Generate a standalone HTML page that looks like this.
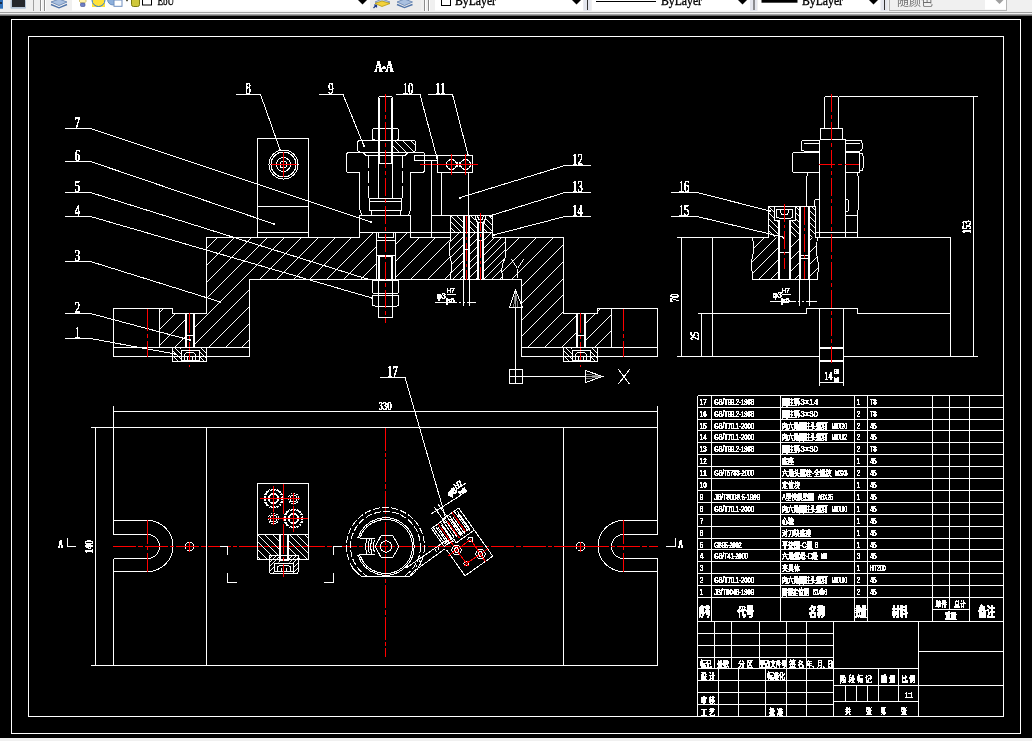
<!DOCTYPE html>
<html lang="zh-CN"><head><meta charset="utf-8"><title>夹具装配图</title>
<style>
html,body{margin:0;padding:0;background:#000;overflow:hidden}
body{width:1032px;height:741px;position:relative}
svg{position:absolute;left:0;top:0;display:block;will-change:transform}
#cad{shape-rendering:crispEdges;fill:none;stroke:#fff;stroke-width:1}
#cad text{stroke:none}
#cad g.dw text{fill:#fff;filter:url(#bin)}
#cad g.dw text.l{stroke:#fff;stroke-width:.25px}
#cad g.dw text.m{stroke:#fff;stroke-width:.4px}
#cad g.dw text.b{stroke:#fff;stroke-width:.3px;font-weight:normal}
#cad g.dw text.bb{font-weight:bold}
.ts{font-family:"Liberation Serif",serif}
.tn{font-family:"Liberation Sans","Noto Sans CJK SC",sans-serif}
.tc{font-family:"Liberation Sans","Noto Sans CJK SC",sans-serif}
#tb text.k{font-family:"Liberation Serif","Noto Serif CJK SC",serif;fill:#000;stroke:#000;stroke-width:.35px}
#tb text.g{font-family:"Liberation Sans","Noto Sans CJK SC",sans-serif;fill:#6d6d6d}
</style></head><body>
<svg id="cad" width="1032" height="741" viewBox="0 0 1032 741">
<defs><filter id="bin" x="-5%" y="-20%" width="110%" height="140%" color-interpolation-filters="sRGB"><feComponentTransfer><feFuncA type="discrete" tableValues="0 0 1 1 1 1"/></feComponentTransfer></filter></defs>
<rect x="0" y="0" width="1032" height="741" fill="#000" stroke="none"/>
<g class="dw" id="s1_frame">
<!-- drawing sheet frame -->
<rect x="11.5" y="19.5" width="1009" height="714"/>
<rect x="28.5" y="36.5" width="975" height="680"/>
<!-- balloon leaders -->
<line x1="65" y1="338.5" x2="90.5" y2="338.5"/>
<line x1="90.5" y1="338.5" x2="175" y2="354"/>
<rect x="174" y="353" width="2" height="2" fill="#fff" stroke="none"/>
<text font-size="17.3" text-anchor="middle" transform="translate(77.5 337.5) scale(0.62 1)" class="ts l">1</text>
<line x1="65" y1="313.5" x2="90.5" y2="313.5"/>
<line x1="90.5" y1="313.5" x2="190" y2="340"/>
<rect x="189" y="339" width="2" height="2" fill="#fff" stroke="none"/>
<text font-size="17.3" text-anchor="middle" transform="translate(77.5 312.5) scale(0.62 1)" class="ts l">2</text>
<line x1="65" y1="261.5" x2="90.5" y2="261.5"/>
<line x1="90.5" y1="261.5" x2="220.5" y2="302"/>
<rect x="219" y="301" width="2" height="2" fill="#fff" stroke="none"/>
<text font-size="17.3" text-anchor="middle" transform="translate(77.5 260.5) scale(0.62 1)" class="ts l">3</text>
<line x1="65" y1="216.5" x2="90.5" y2="216.5"/>
<line x1="90.5" y1="216.5" x2="372" y2="298"/>
<rect x="371" y="297" width="2" height="2" fill="#fff" stroke="none"/>
<text font-size="17.3" text-anchor="middle" transform="translate(77.5 215.5) scale(0.62 1)" class="ts l">4</text>
<line x1="65" y1="192.5" x2="90.5" y2="192.5"/>
<line x1="90.5" y1="192.5" x2="367" y2="279"/>
<rect x="366" y="278" width="2" height="2" fill="#fff" stroke="none"/>
<text font-size="17.3" text-anchor="middle" transform="translate(77.5 191.5) scale(0.62 1)" class="ts l">5</text>
<line x1="65" y1="161.5" x2="90.5" y2="161.5"/>
<line x1="90.5" y1="161.5" x2="274" y2="224"/>
<rect x="273" y="223" width="2" height="2" fill="#fff" stroke="none"/>
<text font-size="17.3" text-anchor="middle" transform="translate(77.5 160.5) scale(0.62 1)" class="ts l">6</text>
<line x1="65" y1="128.5" x2="90.5" y2="128.5"/>
<line x1="90.5" y1="128.5" x2="371" y2="222"/>
<rect x="370" y="221" width="2" height="2" fill="#fff" stroke="none"/>
<text font-size="17.3" text-anchor="middle" transform="translate(77.5 127.5) scale(0.62 1)" class="ts l">7</text>
<line x1="236" y1="94.5" x2="260.5" y2="94.5"/>
<line x1="260.5" y1="94.5" x2="280" y2="149.5"/>
<rect x="279" y="149" width="2" height="2" fill="#fff" stroke="none"/>
<text font-size="17.3" text-anchor="middle" transform="translate(248.25 93.5) scale(0.62 1)" class="ts l">8</text>
<line x1="319" y1="94.5" x2="343" y2="94.5"/>
<line x1="343" y1="94.5" x2="364" y2="146"/>
<rect x="363" y="145" width="2" height="2" fill="#fff" stroke="none"/>
<text font-size="17.3" text-anchor="middle" transform="translate(331 93.5) scale(0.62 1)" class="ts l">9</text>
<line x1="396" y1="94.5" x2="420" y2="94.5"/>
<line x1="420" y1="94.5" x2="437" y2="158"/>
<rect x="436" y="157" width="2" height="2" fill="#fff" stroke="none"/>
<text font-size="17.3" text-anchor="middle" transform="translate(408 93.5) scale(0.62 1)" class="ts l">10</text>
<line x1="428" y1="94.5" x2="452.5" y2="94.5"/>
<line x1="452.5" y1="94.5" x2="468" y2="155"/>
<rect x="467" y="154" width="2" height="2" fill="#fff" stroke="none"/>
<text font-size="17.3" text-anchor="middle" transform="translate(440.25 93.5) scale(0.62 1)" class="ts l">11</text>
<line x1="565" y1="165.5" x2="590.5" y2="165.5"/>
<line x1="565" y1="165.5" x2="460.5" y2="197.5"/>
<rect x="459" y="197" width="2" height="2" fill="#fff" stroke="none"/>
<text font-size="17.3" text-anchor="middle" transform="translate(577.5 164.5) scale(0.62 1)" class="ts l">12</text>
<line x1="565" y1="192.5" x2="590.5" y2="192.5"/>
<line x1="565" y1="192.5" x2="491" y2="215.5"/>
<rect x="490" y="215" width="2" height="2" fill="#fff" stroke="none"/>
<text font-size="17.3" text-anchor="middle" transform="translate(577.5 191.5) scale(0.62 1)" class="ts l">13</text>
<line x1="565" y1="216.5" x2="590.5" y2="216.5"/>
<line x1="565" y1="216.5" x2="493.5" y2="235"/>
<rect x="493" y="234" width="2" height="2" fill="#fff" stroke="none"/>
<text font-size="17.3" text-anchor="middle" transform="translate(577.5 215.5) scale(0.62 1)" class="ts l">14</text>
<line x1="671" y1="192.5" x2="697" y2="192.5"/>
<line x1="697" y1="192.5" x2="770" y2="211"/>
<rect x="769" y="210" width="2" height="2" fill="#fff" stroke="none"/>
<text font-size="17.3" text-anchor="middle" transform="translate(684 191.5) scale(0.62 1)" class="ts l">16</text>
<line x1="671" y1="216.5" x2="697" y2="216.5"/>
<line x1="697" y1="216.5" x2="784.5" y2="237.5"/>
<rect x="783" y="237" width="2" height="2" fill="#fff" stroke="none"/>
<text font-size="17.3" text-anchor="middle" transform="translate(684 215.5) scale(0.62 1)" class="ts l">15</text>
<line x1="380" y1="377.5" x2="405" y2="377.5"/>
<line x1="405" y1="377.5" x2="446" y2="519"/>
<text font-size="17.3" text-anchor="middle" transform="translate(392.5 376.5) scale(0.62 1)" class="ts l">17</text>
<text font-size="17" text-anchor="middle" transform="translate(384 71.5) scale(0.62 1)" class="ts b bb">A-A</text>
</g>
<g class="dw" id="s2_front">
<!-- front section view A-A -->
<polyline points="249.5,356.5 113.5,356.5 113.5,308.5 172.5,308.5 172.5,313.5 206.5,313.5 206.5,237.5 359.5,237.5"/>
<line x1="410.5" y1="237.5" x2="450.5" y2="237.5"/>
<polyline points="492.5,237.5 563.5,237.5 563.5,313.5 597.5,313.5 597.5,308.5 657.5,308.5 657.5,356.5 521.5,356.5 521.5,279.5 249.5,279.5 249.5,356.5"/>
<line x1="113.5" y1="347.5" x2="249.5" y2="347.5"/>
<line x1="521.5" y1="347.5" x2="657.5" y2="347.5"/>
<line x1="159.5" y1="308.5" x2="159.5" y2="347.5"/>
<line x1="611.5" y1="308.5" x2="611.5" y2="347.5"/>
<clipPath id="h1"><path d="M206.5 237.5 L359.5 237.5 L359.5 232.5 L410.5 232.5 L410.5 237.5 L563.5 237.5 L563.5 313.5 L597.5 313.5 L597.5 308.5 L611.5 308.5 L611.5 347.5 L521.5 347.5 L521.5 279.5 L249.5 279.5 L249.5 347.5 L159.5 347.5 L159.5 308.5 L172.5 308.5 L172.5 313.5 L206.5 313.5Z M185.5 313.5 L194.5 313.5 L194.5 347.5 L185.5 347.5Z M576.5 313.5 L585.5 313.5 L585.5 347.5 L576.5 347.5Z M376 232.5 L395.5 232.5 L395.5 279.5 L376 279.5Z M450 237.5 L505.5 237.5 L505.5 257 L503 263 L501.5 270 L503 279.5 L450 279.5 L452 265 L449 252Z" clip-rule="evenodd"/></clipPath>
<path clip-path="url(#h1)" d="M56.5 347.5L171.5 232.5M73.5 347.5L188.5 232.5M90.5 347.5L205.5 232.5M107.5 347.5L222.5 232.5M124.5 347.5L239.5 232.5M141.5 347.5L256.5 232.5M157.5 347.5L272.5 232.5M174.5 347.5L289.5 232.5M191.5 347.5L306.5 232.5M208.5 347.5L323.5 232.5M225.5 347.5L340.5 232.5M241.5 347.5L356.5 232.5M258.5 347.5L373.5 232.5M275.5 347.5L390.5 232.5M292.5 347.5L407.5 232.5M309.5 347.5L424.5 232.5M325.5 347.5L440.5 232.5M342.5 347.5L457.5 232.5M359.5 347.5L474.5 232.5M376.5 347.5L491.5 232.5M393.5 347.5L508.5 232.5M409.5 347.5L524.5 232.5M426.5 347.5L541.5 232.5M443.5 347.5L558.5 232.5M460.5 347.5L575.5 232.5M477.5 347.5L592.5 232.5M494.5 347.5L609.5 232.5M510.5 347.5L625.5 232.5M527.5 347.5L642.5 232.5M544.5 347.5L659.5 232.5M561.5 347.5L676.5 232.5M578.5 347.5L693.5 232.5M594.5 347.5L709.5 232.5"/>
<line x1="185.5" y1="313.5" x2="185.5" y2="347.5"/>
<line x1="186.5" y1="313.5" x2="186.5" y2="347.5"/>
<line x1="194" y1="313.5" x2="194" y2="347.5"/>
<line x1="193" y1="313.5" x2="193" y2="347.5"/>
<line x1="185.5" y1="335.5" x2="194" y2="335.5"/>
<line x1="189.5" y1="313" x2="189.5" y2="367" stroke="#f00" stroke-dasharray="20 3 3 3"/>
<rect x="172.5" y="347.5" width="34" height="14"/>
<rect x="181" y="350.5" width="18" height="10"/>
<clipPath id="h2"><path d="M172.5 347.5 L181 347.5 L181 361.5 L172.5 361.5Z" clip-rule="evenodd"/></clipPath>
<path clip-path="url(#h2)" d="M159.5 347.5L173.5 361.5M164.5 347.5L178.5 361.5M169.5 347.5L183.5 361.5M174.5 347.5L188.5 361.5M179.5 347.5L193.5 361.5"/>
<clipPath id="h3"><path d="M199 347.5 L206.5 347.5 L206.5 361.5 L199 361.5Z" clip-rule="evenodd"/></clipPath>
<path clip-path="url(#h3)" d="M185.5 347.5L199.5 361.5M190.5 347.5L204.5 361.5M195.5 347.5L209.5 361.5M200.5 347.5L214.5 361.5M205.5 347.5L219.5 361.5"/>
<polyline points="184.5,360.5 184.5,354.5 186.5,352.5 193.5,352.5 195.5,354.5 195.5,360.5"/>
<line x1="187.5" y1="355.5" x2="187.5" y2="360.5"/>
<line x1="192.5" y1="355.5" x2="192.5" y2="360.5"/>
<line x1="576.5" y1="313.5" x2="576.5" y2="347.5"/>
<line x1="577.5" y1="313.5" x2="577.5" y2="347.5"/>
<line x1="585" y1="313.5" x2="585" y2="347.5"/>
<line x1="584" y1="313.5" x2="584" y2="347.5"/>
<line x1="576.5" y1="335.5" x2="585" y2="335.5"/>
<line x1="580.5" y1="313" x2="580.5" y2="367" stroke="#f00" stroke-dasharray="20 3 3 3"/>
<rect x="563.5" y="347.5" width="34" height="14"/>
<rect x="572" y="350.5" width="18" height="10"/>
<clipPath id="h4"><path d="M563.5 347.5 L572 347.5 L572 361.5 L563.5 361.5Z" clip-rule="evenodd"/></clipPath>
<path clip-path="url(#h4)" d="M550.5 347.5L564.5 361.5M555.5 347.5L569.5 361.5M560.5 347.5L574.5 361.5M565.5 347.5L579.5 361.5M570.5 347.5L584.5 361.5"/>
<clipPath id="h5"><path d="M590 347.5 L597.5 347.5 L597.5 361.5 L590 361.5Z" clip-rule="evenodd"/></clipPath>
<path clip-path="url(#h5)" d="M576.5 347.5L590.5 361.5M581.5 347.5L595.5 361.5M586.5 347.5L600.5 361.5M591.5 347.5L605.5 361.5M596.5 347.5L610.5 361.5"/>
<polyline points="575.5,360.5 575.5,354.5 577.5,352.5 584.5,352.5 586.5,354.5 586.5,360.5"/>
<line x1="578.5" y1="355.5" x2="578.5" y2="360.5"/>
<line x1="583.5" y1="355.5" x2="583.5" y2="360.5"/>
<line x1="147.5" y1="308.5" x2="147.5" y2="356.5" stroke="#f00" stroke-dasharray="22 3 4 3"/>
<line x1="623.5" y1="308.5" x2="623.5" y2="356.5" stroke="#f00" stroke-dasharray="22 3 4 3"/>
<rect x="257.5" y="138.5" width="51" height="99"/>
<line x1="257.5" y1="206.5" x2="308.5" y2="206.5"/>
<line x1="257.5" y1="232.5" x2="308.5" y2="232.5"/>
<circle cx="283.5" cy="164.5" r="14.5"/>
<circle cx="283.5" cy="164.5" r="12.5"/>
<circle cx="283.5" cy="164.5" r="7"/>
<circle cx="283.5" cy="164.5" r="3.5"/>
<line x1="271" y1="164.5" x2="296.5" y2="164.5" stroke="#f00"/>
<line x1="283.5" y1="151.5" x2="283.5" y2="177" stroke="#f00"/>
<path d="M378.5 163.5V98.5Q378.5 96.5 380.5 96.5H390.5Q392.5 96.5 392.5 98.5V163.5Z"/>
<line x1="379.5" y1="97.5" x2="379.5" y2="163.5"/>
<line x1="391.5" y1="97.5" x2="391.5" y2="163.5"/>
<path d="M372.5 130.5Q372.5 128.5 374.5 128.5H396.5Q398.5 128.5 398.5 130.5V138Q398.5 140 396.5 140H374.5Q372.5 140 372.5 138Z"/>
<path d="M357.5 143Q357.5 140.5 360 140.5H413Q415.5 140.5 415.5 143V149Q415.5 152 413 152H360Q357.5 152 357.5 149Z"/>
<clipPath id="h6"><path d="M393 140.5 L415.5 140.5 L415.5 152 L393 152Z" clip-rule="evenodd"/></clipPath>
<path clip-path="url(#h6)" d="M387.5 140.5L399 152M394.5 140.5L406 152M402.5 140.5L414 152M410.5 140.5L422 152"/>
<path d="M362 215.5L359.500 209V172.500H349Q346.5 172.5 346.5 170V155Q346.5 152.5 349 152.5H422Q424.5 152.5 424.5 155V170Q424.5 172.5 422 172.5H410.500V209L408.500 215.500"/>
<line x1="363" y1="152.5" x2="366" y2="155.5"/>
<line x1="366" y1="155.5" x2="405" y2="155.5"/>
<line x1="405" y1="155.5" x2="408" y2="152.5"/>
<line x1="368.5" y1="155.5" x2="368.5" y2="198.5" stroke-dasharray="12 3"/>
<line x1="402.5" y1="155.5" x2="402.5" y2="198.5" stroke-dasharray="12 3"/>
<line x1="378.5" y1="163.5" x2="378.5" y2="198.5"/>
<line x1="392.5" y1="163.5" x2="392.5" y2="198.5"/>
<rect x="369.5" y="198.5" width="32" height="12"/>
<line x1="369.5" y1="201.5" x2="401.5" y2="201.5"/>
<rect x="371.5" y="210.5" width="28.5" height="5"/>
<polyline points="359.5,237.5 359.5,215.5 410.5,215.5 410.5,237.5"/>
<line x1="359.5" y1="232.5" x2="410.5" y2="232.5"/>
<polyline points="378.5,232.5 378.5,237.5 393.5,237.5 393.5,232.5"/>
<line x1="376" y1="232.5" x2="376" y2="279.5"/>
<line x1="395.5" y1="232.5" x2="395.5" y2="279.5"/>
<line x1="376" y1="240.5" x2="395.5" y2="240.5"/>
<line x1="376" y1="255.5" x2="395.5" y2="255.5"/>
<line x1="378.5" y1="255.5" x2="378.5" y2="317.5"/>
<line x1="392.5" y1="255.5" x2="392.5" y2="317.5"/>
<line x1="379.5" y1="256.5" x2="379.5" y2="279.5"/>
<line x1="391.5" y1="256.5" x2="391.5" y2="279.5"/>
<line x1="378.5" y1="256.5" x2="392.5" y2="256.5"/>
<line x1="378.5" y1="317.5" x2="392.5" y2="317.5"/>
<path d="M372.5 282Q372.5 280 374.5 280H396.5Q398.5 280 398.5 282V291.5Q398.5 293.5 396.5 293.5H374.5Q372.5 293.5 372.5 291.5Z"/>
<path d="M372.5 297Q372.5 295 374.5 295H396.5Q398.5 295 398.5 297V304Q398.5 306 396.5 306H374.5Q372.5 306 372.5 304Z"/>
<line x1="378.5" y1="280" x2="378.5" y2="306.5"/>
<line x1="392.5" y1="280" x2="392.5" y2="306.5"/>
<line x1="385.5" y1="94" x2="385.5" y2="323" stroke="#f00" stroke-dasharray="18 3 4 3"/>
<rect x="414.5" y="155.5" width="23" height="5"/>
<rect x="437.5" y="155.5" width="35" height="17"/>
<circle cx="451.5" cy="164.5" r="5"/>
<circle cx="465.5" cy="164.5" r="5"/>
<line x1="457" y1="162.5" x2="460" y2="166.5"/>
<line x1="457" y1="166.5" x2="460" y2="162.5"/>
<line x1="420" y1="164.5" x2="477.5" y2="164.5" stroke="#f00"/>
<line x1="451.5" y1="154" x2="451.5" y2="175" stroke="#f00"/>
<line x1="465.5" y1="154" x2="465.5" y2="175" stroke="#f00"/>
<line x1="441.5" y1="172.5" x2="441.5" y2="215.5"/>
<line x1="468.5" y1="172.5" x2="468.5" y2="237.5"/>
<line x1="431.5" y1="160.5" x2="431.5" y2="237.5"/>
<line x1="410.5" y1="232.5" x2="431.5" y2="232.5"/>
<line x1="431.5" y1="232.5" x2="450.5" y2="232.5"/>
<polyline points="450.5,237.5 431.5,237.5 431.5,215.5 492.5,215.5 492.5,237.5"/>
<line x1="450.5" y1="215.5" x2="450.5" y2="237.5"/>
<line x1="450.5" y1="232.5" x2="492.5" y2="232.5"/>
<clipPath id="h7"><path d="M450.5 215.5 L463.5 215.5 L463.5 232.5 L450.5 232.5Z" clip-rule="evenodd"/></clipPath>
<path clip-path="url(#h7)" d="M438.5 215.5L455.5 232.5M444.5 215.5L461.5 232.5M450.5 215.5L467.5 232.5M456.5 215.5L473.5 232.5M462.5 215.5L479.5 232.5"/>
<clipPath id="h8"><path d="M469.5 215.5 L475 215.5 L475 222 L477.5 222 L477.5 232.5 L469.5 232.5Z" clip-rule="evenodd"/></clipPath>
<path clip-path="url(#h8)" d="M452.5 215.5L469.5 232.5M458.5 215.5L475.5 232.5M464.5 215.5L481.5 232.5M470.5 215.5L487.5 232.5M476.5 215.5L493.5 232.5"/>
<clipPath id="h9"><path d="M486 215.5 L492.5 215.5 L492.5 232.5 L483.5 232.5 L483.5 222 L486 222Z" clip-rule="evenodd"/></clipPath>
<path clip-path="url(#h9)" d="M470.5 215.5L487.5 232.5M476.5 215.5L493.5 232.5M482.5 215.5L499.5 232.5M488.5 215.5L505.5 232.5"/>
<line x1="463.5" y1="215.5" x2="463.5" y2="306"/>
<line x1="469.5" y1="215.5" x2="469.5" y2="306"/>
<line x1="464.5" y1="215.5" x2="464.5" y2="279.5"/>
<line x1="468.5" y1="215.5" x2="468.5" y2="279.5"/>
<line x1="466.5" y1="216" x2="466.5" y2="279.5" stroke="#f00" stroke-dasharray="18 3 3 3"/>
<line x1="463.5" y1="249.5" x2="469.5" y2="249.5"/>
<polyline points="475.5,215.5 475.5,218.5 477.5,222.5 477.5,279.5"/>
<polyline points="485.5,215.5 485.5,218.5 483.5,222.5 483.5,279.5"/>
<line x1="478.5" y1="222.5" x2="478.5" y2="279.5"/>
<line x1="482.5" y1="222.5" x2="482.5" y2="279.5"/>
<polyline points="477.5,215.5 478.5,219.5 482.5,219.5 483.5,215.5"/>
<line x1="476.5" y1="222.5" x2="484.5" y2="222.5"/>
<line x1="477.5" y1="240.5" x2="483.5" y2="240.5"/>
<line x1="480.5" y1="212.5" x2="480.5" y2="279.5" stroke="#f00" stroke-dasharray="18 3 3 3"/>
<polyline points="505.5,237.5 505.5,257 503,263 501.5,270 503,279.5"/>
<polyline points="450.5,237.5 449,252 452,265 450,279.5"/>
<clipPath id="h10"><path d="M450.5 232.5 L492.5 232.5 L492.5 237.5 L505.5 237.5 L505.5 257 L503 263 L501.5 270 L503 279.5 L450 279.5 L452 265 L449 252 L450.5 240Z M463.5 232.5 L469.5 232.5 L469.5 279.5 L463.5 279.5Z M477.5 232.5 L483.5 232.5 L483.5 279.5 L477.5 279.5Z" clip-rule="evenodd"/></clipPath>
<path clip-path="url(#h10)" d="M404.5 279.5L451.5 232.5M412.5 279.5L459.5 232.5M420.5 279.5L467.5 232.5M428.5 279.5L475.5 232.5M436.5 279.5L483.5 232.5M444.5 279.5L491.5 232.5M452.5 279.5L499.5 232.5M459.5 279.5L506.5 232.5M467.5 279.5L514.5 232.5M475.5 279.5L522.5 232.5M483.5 279.5L530.5 232.5M491.5 279.5L538.5 232.5M499.5 279.5L546.5 232.5"/>
<line x1="435" y1="302.5" x2="475.5" y2="302.5" stroke-dasharray="22 2 2 2 2 2"/>
<text x="436.7" y="298.5" font-size="9" textLength="9" lengthAdjust="spacingAndGlyphs" class="tn b">φ3</text>
<line x1="446.5" y1="294.5" x2="455.5" y2="294.5"/>
<text x="447" y="293.3" font-size="6.5" textLength="7.5" lengthAdjust="spacingAndGlyphs" class="tn b">H7</text>
<text x="446.5" y="302.5" font-size="6.5" textLength="8" lengthAdjust="spacingAndGlyphs" class="tn b">js6</text>
<rect x="509.5" y="369.5" width="13" height="14"/>
<line x1="515.5" y1="369.5" x2="515.5" y2="383.5"/>
<line x1="509.5" y1="376.5" x2="522.5" y2="376.5"/>
<line x1="515.5" y1="307.5" x2="515.5" y2="369.5"/>
<line x1="515.5" y1="292" x2="513.5" y2="307.5" stroke="#777"/>
<line x1="515.5" y1="292" x2="518" y2="307.5" stroke="#777"/>
<line x1="515.5" y1="292" x2="515.5" y2="307.5" stroke="#aaa"/>
<polygon points="515.5,290 509.5,307.5 522.5,307.5"/>
<line x1="522.5" y1="376.5" x2="585.5" y2="376.5"/>
<line x1="601" y1="376.5" x2="585.5" y2="374" stroke="#777"/>
<line x1="601" y1="376.5" x2="585.5" y2="379" stroke="#777"/>
<line x1="601" y1="376.5" x2="585.5" y2="376.5" stroke="#aaa"/>
<polygon points="602.5,376.5 585.5,370.5 585.5,382.5"/>
<line x1="618.5" y1="369.5" x2="629.5" y2="384"/>
<line x1="629.5" y1="369.5" x2="618.5" y2="384"/>
<line x1="511.5" y1="259.5" x2="517.5" y2="268.5"/>
<line x1="523.5" y1="259.5" x2="517.5" y2="268.5"/>
<line x1="517.5" y1="268.5" x2="517.5" y2="277.5"/>
</g>
<g class="dw" id="s3_side">
<!-- right side view -->
<line x1="677" y1="237.5" x2="768.5" y2="237.5"/>
<line x1="815" y1="237.5" x2="950.5" y2="237.5"/>
<line x1="712.5" y1="237.5" x2="712.5" y2="356.5"/>
<line x1="950.5" y1="237.5" x2="950.5" y2="356.5"/>
<line x1="677" y1="356.5" x2="819.5" y2="356.5"/>
<line x1="843.5" y1="356.5" x2="978" y2="356.5"/>
<polyline points="697.5,313.5 806.5,313.5 806.5,308.5 857.5,308.5 857.5,313.5 950.5,313.5"/>
<line x1="819.5" y1="308.5" x2="819.5" y2="386"/>
<line x1="843.5" y1="308.5" x2="843.5" y2="386"/>
<line x1="819.5" y1="347.5" x2="843.5" y2="347.5"/>
<line x1="819.5" y1="348.5" x2="843.5" y2="348.5"/>
<line x1="819.5" y1="361.5" x2="843.5" y2="361.5"/>
<line x1="819.5" y1="360.5" x2="843.5" y2="360.5"/>
<line x1="819.5" y1="382.5" x2="843.5" y2="382.5"/>
<text font-size="13" transform="translate(824.5 379.7) scale(0.6 1)" class="ts m">14</text>
<text x="833.7" y="374.2" font-size="7" textLength="5.5" lengthAdjust="spacingAndGlyphs" class="tn b">G6</text>
<text x="833.7" y="382.2" font-size="7" textLength="5.5" lengthAdjust="spacingAndGlyphs" class="tn b">h6</text>
<line x1="681.5" y1="237.5" x2="681.5" y2="356.5"/>
<line x1="701.5" y1="313.5" x2="701.5" y2="356.5"/>
<text font-size="12.5" text-anchor="middle" transform="translate(678.7 298) rotate(-90) scale(0.69 1)" class="ts b">70</text>
<text font-size="12.5" text-anchor="middle" transform="translate(698.7 336) rotate(-90) scale(0.69 1)" class="ts b">25</text>
<line x1="838.5" y1="96.5" x2="978" y2="96.5"/>
<line x1="973.5" y1="96.5" x2="973.5" y2="356.5"/>
<text font-size="12.5" text-anchor="middle" transform="translate(970.7 227) rotate(-90) scale(0.69 1)" class="ts b">153</text>
<path d="M824.5 128.5V98.5Q824.5 96.5 826.5 96.5H836.5Q838.5 96.5 838.5 98.5V128.5"/>
<rect x="820.5" y="128.5" width="22" height="11"/>
<line x1="819.5" y1="139.5" x2="819.5" y2="237.5"/>
<line x1="845.5" y1="139.5" x2="845.5" y2="237.5"/>
<line x1="819.5" y1="139.5" x2="845.5" y2="139.5"/>
<path d="M819.5 140.5H803.5Q801.5 140.5 801.5 142.5V149Q801.5 151 803.5 151H819.5"/>
<path d="M845.5 140.5H860Q862 140.5 862 142.5V149Q862 151 860 151H845.5"/>
<line x1="803.5" y1="143.5" x2="819.5" y2="143.5"/>
<line x1="845.5" y1="143.5" x2="860" y2="143.5"/>
<path d="M819.5 152.5H794.5Q792.5 152.5 792.5 154.5V170.5Q792.5 172.5 794.5 172.5H819.5"/>
<path d="M845.5 152.5H859.5V172.5H845.5"/>
<path d="M859.5 153.5H861.5Q863 153.5 863 155.5V168Q863 170.5 861.5 170.5H859.5"/>
<line x1="819" y1="164.5" x2="859" y2="164.5" stroke="#f00" stroke-dasharray="16 3 4 3"/>
<polyline points="807.5,172.5 806.5,180 806.5,206.5"/>
<polyline points="857.5,172.5 858.5,180 858.5,205 857.5,215.5"/>
<path d="M819.5 199.5H816.5Q814.5 199.5 814.5 201.5V206.5"/>
<path d="M845.5 199.5H847Q848.5 199.5 848.5 201.5V209.5Q848.5 211.5 847 211.5H845.5"/>
<line x1="845.5" y1="215.5" x2="857.5" y2="215.5"/>
<line x1="857.5" y1="215.5" x2="857.5" y2="237.5"/>
<line x1="815" y1="232.5" x2="857.5" y2="232.5"/>
<line x1="831.5" y1="94" x2="831.5" y2="362.5" stroke="#f00" stroke-dasharray="18 3 4 3"/>
<polyline points="768.5,237.5 768.5,206.5 815,206.5 815,237.5"/>
<polyline points="752.5,237.5 754,248 751.5,262 752.5,279.5 817.5,279.5 818.5,265 816,250 817.5,237.5"/>
<clipPath id="h11"><path d="M752.5 237.5 L817.5 237.5 L816 250 L818.5 265 L817.5 279.5 L752.5 279.5 L751.5 262 L754 248Z M778.5 237.5 L790.5 237.5 L790.5 279.5 L778.5 279.5Z M799.5 237.5 L809.5 237.5 L809.5 279.5 L799.5 279.5Z" clip-rule="evenodd"/></clipPath>
<path clip-path="url(#h11)" d="M710.5 279.5L752.5 237.5M722.5 279.5L764.5 237.5M734.5 279.5L776.5 237.5M746.5 279.5L788.5 237.5M758.5 279.5L800.5 237.5M770.5 279.5L812.5 237.5M782.5 279.5L824.5 237.5M794.5 279.5L836.5 237.5M806.5 279.5L848.5 237.5"/>
<clipPath id="h12"><path d="M768.5 206.5 L774 206.5 L774 220 L778.5 220 L778.5 237.5 L768.5 237.5Z" clip-rule="evenodd"/></clipPath>
<path clip-path="url(#h12)" d="M738.5 206.5L769.5 237.5M744.5 206.5L775.5 237.5M750.5 206.5L781.5 237.5M756.5 206.5L787.5 237.5M762.5 206.5L793.5 237.5M768.5 206.5L799.5 237.5M774.5 206.5L805.5 237.5"/>
<clipPath id="h13"><path d="M790.5 220 L795 220 L795 206.5 L799.5 206.5 L799.5 237.5 L790.5 237.5Z" clip-rule="evenodd"/></clipPath>
<path clip-path="url(#h13)" d="M759.5 206.5L790.5 237.5M765.5 206.5L796.5 237.5M771.5 206.5L802.5 237.5M777.5 206.5L808.5 237.5M783.5 206.5L814.5 237.5M789.5 206.5L820.5 237.5M795.5 206.5L826.5 237.5"/>
<clipPath id="h14"><path d="M809.5 206.5 L815 206.5 L815 237.5 L809.5 237.5Z" clip-rule="evenodd"/></clipPath>
<path clip-path="url(#h14)" d="M781.5 206.5L812.5 237.5M787.5 206.5L818.5 237.5M793.5 206.5L824.5 237.5M799.5 206.5L830.5 237.5M805.5 206.5L836.5 237.5M811.5 206.5L842.5 237.5"/>
<polyline points="774,206.5 774,220 778.5,220 778.5,279.5"/>
<line x1="779.5" y1="220" x2="779.5" y2="279.5"/>
<line x1="789.5" y1="220" x2="789.5" y2="279.5"/>
<polyline points="795,206.5 795,220 790.5,220 790.5,279.5"/>
<path d="M776.5 209.5H792.5V216Q792.5 218 790.5 218H778.5Q776.5 218 776.5 216Z"/>
<polyline points="780,209.5 781.5,214.5 787.5,214.5 789,209.5"/>
<line x1="778.5" y1="252.5" x2="790.5" y2="252.5"/>
<line x1="784.5" y1="203.5" x2="784.5" y2="269" stroke="#f00" stroke-dasharray="18 3 3 3"/>
<line x1="799.5" y1="206.5" x2="799.5" y2="306"/>
<line x1="809.5" y1="206.5" x2="809.5" y2="306"/>
<line x1="800.5" y1="206.5" x2="800.5" y2="279.5"/>
<line x1="808.5" y1="206.5" x2="808.5" y2="279.5"/>
<path d="M799.5 256.5Q804.5 254.5 809.5 256.5"/>
<line x1="799.5" y1="258.5" x2="809.5" y2="258.5"/>
<line x1="804.5" y1="206.5" x2="804.5" y2="279.5" stroke="#f00" stroke-dasharray="18 3 3 3"/>
<line x1="770" y1="301.5" x2="817" y2="301.5" stroke-dasharray="26 2 2 2 2 2"/>
<text x="773" y="298.3" font-size="9" textLength="9" lengthAdjust="spacingAndGlyphs" class="tn b">φ3</text>
<line x1="781.5" y1="294.5" x2="790.5" y2="294.5"/>
<text x="782" y="293.2" font-size="6.5" textLength="7.5" lengthAdjust="spacingAndGlyphs" class="tn b">H7</text>
<text x="781.5" y="302.8" font-size="6.5" textLength="8" lengthAdjust="spacingAndGlyphs" class="tn b">js6</text>
</g>
<g class="dw" id="s4_plan">
<!-- plan view -->
<polyline points="113.5,534.5 113.5,427.5 657.5,427.5 657.5,534.5"/>
<polyline points="113.5,558.5 113.5,665.5 657.5,665.5 657.5,558.5"/>
<line x1="206.5" y1="427.5" x2="206.5" y2="665.5"/>
<line x1="563.5" y1="427.5" x2="563.5" y2="665.5"/>
<line x1="113.5" y1="406" x2="113.5" y2="427.5"/>
<line x1="657.5" y1="406" x2="657.5" y2="427.5"/>
<line x1="113.5" y1="411.5" x2="657.5" y2="411.5"/>
<text font-size="12.5" text-anchor="middle" transform="translate(385 409.7) scale(0.69 1)" class="ts b">330</text>
<line x1="91" y1="427.5" x2="113.5" y2="427.5"/>
<line x1="91" y1="665.5" x2="113.5" y2="665.5"/>
<line x1="95.5" y1="427.5" x2="95.5" y2="665.5"/>
<text font-size="12.5" text-anchor="middle" transform="translate(93 547) rotate(-90) scale(0.69 1)" class="ts b">140</text>
<text font-size="13" text-anchor="middle" transform="translate(60.5 548) scale(0.5 1)" class="ts b bb">A</text>
<polyline points="67.5,537.5 67.5,546.5 75.5,546.5"/>
<text font-size="13" text-anchor="middle" transform="translate(680.5 548) scale(0.5 1)" class="ts b bb">A</text>
<polyline points="666,546.5 675.5,546.5 675.5,537.5"/>
<path d="M113.5 520.5H147.5A25.5 25.5 0 0 1 147.5 571.5H113.5"/>
<path d="M113.5 534.5H147.5A12 12 0 0 1 147.5 558.5H113.5"/>
<line x1="147.5" y1="520" x2="147.5" y2="572" stroke="#f00" stroke-dasharray="24 3 3 3"/>
<path d="M657.5 520.5H623.5A25.5 25.5 0 0 0 623.5 571.5H657.5"/>
<path d="M657.5 534.5H623.5A12 12 0 0 0 623.5 558.5H657.5"/>
<line x1="623.5" y1="520" x2="623.5" y2="572" stroke="#f00" stroke-dasharray="24 3 3 3"/>
<circle cx="189.5" cy="546.5" r="4.5"/>
<circle cx="580.5" cy="546.5" r="4.5"/>
<line x1="185" y1="546.5" x2="194.5" y2="546.5" stroke="#f00"/>
<line x1="189.5" y1="542" x2="189.5" y2="551.5" stroke="#f00"/>
<line x1="576" y1="546.5" x2="585.5" y2="546.5" stroke="#f00"/>
<line x1="580.5" y1="542" x2="580.5" y2="551.5" stroke="#f00"/>
<line x1="113" y1="546.5" x2="657.5" y2="546.5" stroke="#f00" stroke-dasharray="23 2 4.5 2"/>
<line x1="385.5" y1="427.5" x2="385.5" y2="657" stroke="#f00" stroke-dasharray="23 2 4.5 2"/>
<polyline points="219.5,546.5 227.5,546.5 227.5,555"/>
<polyline points="227.5,573 227.5,582.5 237,582.5"/>
<polyline points="341.5,546.5 333.5,546.5 333.5,555"/>
<polyline points="333.5,573 333.5,582.5 324,582.5"/>
<rect x="257.5" y="483.5" width="51" height="51"/>
<rect x="257.5" y="534.5" width="51" height="25"/>
<circle cx="273.5" cy="498.5" r="9.5" stroke-dasharray="2 1"/>
<circle cx="273.5" cy="498.5" r="8.5" stroke-dasharray="2 1"/>
<circle cx="273.5" cy="498.5" r="5"/>
<circle cx="273.5" cy="498.5" r="4.5"/>
<line x1="259.5" y1="498.5" x2="287.5" y2="498.5" stroke="#f00"/>
<line x1="273.5" y1="485.5" x2="273.5" y2="511.5" stroke="#f00"/>
<circle cx="293.5" cy="498.5" r="5.3" stroke-dasharray="2 1"/>
<circle cx="293.5" cy="498.5" r="3.5"/>
<line x1="287.5" y1="498.5" x2="299.5" y2="498.5" stroke="#f00"/>
<line x1="293.5" y1="492.5" x2="293.5" y2="504.5" stroke="#f00"/>
<circle cx="273.5" cy="518.5" r="5.3" stroke-dasharray="2 1"/>
<circle cx="273.5" cy="518.5" r="3.5"/>
<line x1="267.5" y1="518.5" x2="279.5" y2="518.5" stroke="#f00"/>
<line x1="273.5" y1="512.5" x2="273.5" y2="524.5" stroke="#f00"/>
<circle cx="293.5" cy="518.5" r="9.5" stroke-dasharray="2 1"/>
<circle cx="293.5" cy="518.5" r="8.5" stroke-dasharray="2 1"/>
<circle cx="293.5" cy="518.5" r="5"/>
<circle cx="293.5" cy="518.5" r="4.5"/>
<line x1="279.5" y1="518.5" x2="307.5" y2="518.5" stroke="#f00"/>
<line x1="293.5" y1="505.5" x2="293.5" y2="531.5" stroke="#f00"/>
<line x1="280.5" y1="534.5" x2="280.5" y2="560.5"/>
<line x1="287.5" y1="534.5" x2="287.5" y2="560.5"/>
<line x1="279.5" y1="534.5" x2="279.5" y2="560.5"/>
<line x1="288.5" y1="534.5" x2="288.5" y2="560.5"/>
<line x1="279.5" y1="560.5" x2="288.5" y2="560.5"/>
<clipPath id="h15"><path d="M257.5 534.5 L280.5 534.5 L280.5 555.5 L269.5 555.5 L269.5 559.5 L257.5 559.5Z" clip-rule="evenodd"/></clipPath>
<path clip-path="url(#h15)" d="M235.5 534.5L260.5 559.5M242.5 534.5L267.5 559.5M250.5 534.5L275.5 559.5M257.5 534.5L282.5 559.5M264.5 534.5L289.5 559.5M272.5 534.5L297.5 559.5M279.5 534.5L304.5 559.5"/>
<clipPath id="h16"><path d="M287.5 534.5 L308.5 534.5 L308.5 559.5 L298 559.5 L298 555.5 L287.5 555.5Z" clip-rule="evenodd"/></clipPath>
<path clip-path="url(#h16)" d="M267.5 534.5L292.5 559.5M275.5 534.5L300.5 559.5M282.5 534.5L307.5 559.5M289.5 534.5L314.5 559.5M296.5 534.5L321.5 559.5M304.5 534.5L329.5 559.5"/>
<path d="M269.5 555.5H298V571.5Q298 573.5 296 573.5H271.5Q269.5 573.5 269.5 571.5Z"/>
<clipPath id="h17"><path d="M269.5 555.5 L280.5 555.5 L280.5 562.5 L274.5 562.5 L274.5 573.5 L269.5 573.5Z" clip-rule="evenodd"/></clipPath>
<path clip-path="url(#h17)" d="M254.5 573.5L272.5 555.5M258.5 573.5L276.5 555.5M262.5 573.5L280.5 555.5M267.5 573.5L285.5 555.5M272.5 573.5L290.5 555.5M276.5 573.5L294.5 555.5"/>
<clipPath id="h18"><path d="M287.5 555.5 L298 555.5 L298 573.5 L293 573.5 L293 562.5 L287.5 562.5Z" clip-rule="evenodd"/></clipPath>
<path clip-path="url(#h18)" d="M269.5 573.5L287.5 555.5M274.5 573.5L292.5 555.5M278.5 573.5L296.5 555.5M282.5 573.5L300.5 555.5M287.5 573.5L305.5 555.5M292.5 573.5L310.5 555.5M296.5 573.5L314.5 555.5"/>
<rect x="274.5" y="563.5" width="19" height="8"/>
<polyline points="277.5,571.5 277.5,567 279.5,565.5 288.5,565.5 290.5,567 290.5,571.5"/>
<line x1="281.5" y1="567.5" x2="281.5" y2="571.5"/>
<line x1="286.5" y1="567.5" x2="286.5" y2="571.5"/>
<line x1="283.5" y1="483.5" x2="283.5" y2="577" stroke="#f00" stroke-dasharray="30 3 4 3"/>
<clipPath id="wclip"><rect x="340" y="500" width="90" height="76.5"/></clipPath>
<g clip-path="url(#wclip)">
<circle cx="385.5" cy="546.5" r="39" stroke-dasharray="7 2"/>
<circle cx="385.5" cy="546.5" r="35" stroke-dasharray="7 2"/>
</g>
<path d="M358.2 537.63A28.7 28.7 0 1 1 358.2 555.37"/>
<path d="M360.13 537.27A27 27 0 1 1 360.13 555.73"/>
<polyline points="357.5,537 359.5,538 375,539"/>
<polyline points="357.5,556 359.5,555 375,554"/>
<polygon points="398.8,546.5 392.9,557.41 381.1,557.41 375.2,546.5 381.1,535.59 392.9,535.59"/>
<circle cx="386" cy="546.5" r="5.7"/>
<path d="M367 539Q364.5 546.5 367 554"/>
<path d="M369.5 539.5Q367 546.5 369.5 553.5"/>
<path d="M372 539.5Q369.5 546.5 372 553.5"/>
<path d="M374.5 540.5Q372.5 546.5 374.5 552.5"/>
<polyline points="352,567.5 361.5,576.5 409.5,576.5 413.5,571.5"/>
<line x1="406" y1="568" x2="447" y2="540"/>
<line x1="413.5" y1="571.5" x2="445" y2="548.8"/>
<line x1="415" y1="562.8" x2="416.8" y2="566.8"/>
<line x1="419.4" y1="560" x2="421.2" y2="564.5"/>
<line x1="434.5" y1="547.6" x2="436.3" y2="552"/>
<line x1="438" y1="546.7" x2="439" y2="550.3"/>
<polyline points="444.21,546.46 431.5,528.5 444.56,519.25 443.98,518.44 458.67,508.04 492.76,556.19 465.02,575.84 446.52,549.72"/>
<polyline points="444.21,546.46 454.01,539.52 456.32,542.79 474.27,530.07"/>
<polyline points="444.56,519.25 457.27,537.21"/>
<line x1="433.71" y1="528.16" x2="444.69" y2="543.67"/>
<line x1="435.75" y1="526.72" x2="446.73" y2="542.22"/>
<line x1="441.06" y1="522.96" x2="452.03" y2="538.47"/>
<line x1="443.1" y1="521.52" x2="454.08" y2="537.02"/>
<line x1="447.41" y1="517.23" x2="460.13" y2="535.19"/>
<line x1="449.46" y1="515.79" x2="462.17" y2="533.74"/>
<line x1="454.76" y1="512.03" x2="467.47" y2="529.99"/>
<line x1="456.8" y1="510.59" x2="469.51" y2="528.54"/>
<line x1="438.13" y1="527.48" x2="450.27" y2="544.62"/>
<line x1="441.39" y1="525.17" x2="453.53" y2="542.31"/>
<line x1="450.37" y1="518.81" x2="462.51" y2="535.95"/>
<line x1="452.82" y1="517.08" x2="464.96" y2="534.22"/>
<line x1="457.72" y1="513.61" x2="469.85" y2="530.75"/>
<line x1="444.69" y1="543.67" x2="454.48" y2="536.73"/>
<line x1="460.13" y1="535.19" x2="469.51" y2="528.54"/>
<line x1="438.03" y1="523.88" x2="453.63" y2="545.91" stroke="#f00"/>
<line x1="447.27" y1="521.01" x2="459.41" y2="538.15" stroke="#f00"/>
<line x1="452.14" y1="512.66" x2="466.01" y2="532.25" stroke="#f00"/>
<circle cx="456.5" cy="550" r="4.7"/>
<circle cx="456.5" cy="550" r="2.2"/>
<circle cx="480.5" cy="554" r="4.7"/>
<circle cx="480.5" cy="554" r="2.2"/>
<circle cx="470.5" cy="539.5" r="2.5"/>
<circle cx="466.5" cy="563.5" r="2.5"/>
<polygon points="456.5,550 470.5,539.5 480.5,554 466.5,563.5" stroke="#f00"/>
<line x1="448" y1="556" x2="456.5" y2="550" stroke="#f00"/>
<line x1="480.5" y1="554" x2="487.5" y2="549" stroke="#f00"/>
<line x1="480.5" y1="554" x2="485.5" y2="562" stroke="#f00"/>
<line x1="464.5" y1="561" x2="468.5" y2="566" stroke="#f00"/>
<line x1="464.5" y1="566" x2="468.5" y2="561" stroke="#f00"/>
<line x1="431.5" y1="513.7" x2="462" y2="494.5"/>
<line x1="434.2" y1="507" x2="445.6" y2="523.2"/>
<line x1="438.2" y1="504.3" x2="449" y2="519.5"/>
<text font-size="9.5" text-anchor="middle" textLength="9.5" lengthAdjust="spacingAndGlyphs" transform="translate(453.5 494.5) rotate(-34)" class="tn b">φ8</text>
<text font-size="7" text-anchor="middle" textLength="8.5" lengthAdjust="spacingAndGlyphs" transform="translate(459.5 486.5) rotate(-34)" class="tn b">H7</text>
<text font-size="7" text-anchor="middle" textLength="8.5" lengthAdjust="spacingAndGlyphs" transform="translate(464 493.5) rotate(-34)" class="tn b">h6</text>
<line x1="455" y1="490.5" x2="466" y2="483"/>
</g>
<g class="dw" id="s5_table">
<!-- parts list -->
<line x1="697.5" y1="395.5" x2="1003.5" y2="395.5"/>
<line x1="697.5" y1="407.5" x2="1003.5" y2="407.5"/>
<line x1="697.5" y1="419.5" x2="1003.5" y2="419.5"/>
<line x1="697.5" y1="430.5" x2="1003.5" y2="430.5"/>
<line x1="697.5" y1="442.5" x2="1003.5" y2="442.5"/>
<line x1="697.5" y1="454.5" x2="1003.5" y2="454.5"/>
<line x1="697.5" y1="466.5" x2="1003.5" y2="466.5"/>
<line x1="697.5" y1="478.5" x2="1003.5" y2="478.5"/>
<line x1="697.5" y1="490.5" x2="1003.5" y2="490.5"/>
<line x1="697.5" y1="502.5" x2="1003.5" y2="502.5"/>
<line x1="697.5" y1="514.5" x2="1003.5" y2="514.5"/>
<line x1="697.5" y1="526.5" x2="1003.5" y2="526.5"/>
<line x1="697.5" y1="538.5" x2="1003.5" y2="538.5"/>
<line x1="697.5" y1="549.5" x2="1003.5" y2="549.5"/>
<line x1="697.5" y1="561.5" x2="1003.5" y2="561.5"/>
<line x1="697.5" y1="573.5" x2="1003.5" y2="573.5"/>
<line x1="697.5" y1="585.5" x2="1003.5" y2="585.5"/>
<line x1="697.5" y1="597.5" x2="1003.5" y2="597.5"/>
<line x1="697.5" y1="395.5" x2="697.5" y2="621.5"/>
<line x1="711.5" y1="395.5" x2="711.5" y2="621.5"/>
<line x1="780.5" y1="395.5" x2="780.5" y2="621.5"/>
<line x1="854.5" y1="395.5" x2="854.5" y2="621.5"/>
<line x1="867.5" y1="395.5" x2="867.5" y2="621.5"/>
<line x1="932.5" y1="395.5" x2="932.5" y2="621.5"/>
<line x1="949.5" y1="395.5" x2="949.5" y2="609.5"/>
<line x1="969.5" y1="395.5" x2="969.5" y2="621.5"/>
<line x1="1003.5" y1="395.5" x2="1003.5" y2="621.5"/>
<line x1="697.5" y1="621.5" x2="1003.5" y2="621.5"/>
<text x="699.7" y="405.3" class="tn b" font-size="9.2" textLength="7" lengthAdjust="spacingAndGlyphs">17</text>
<text x="714.2" y="405.3" class="tn b" font-size="9.2" textLength="39.8" lengthAdjust="spacingAndGlyphs">GB/T99.2-1988</text>
<text x="782" y="405" class="tc b" font-size="8.4" textLength="17.5" lengthAdjust="spacingAndGlyphs">圆柱销</text>
<text x="800.5" y="405.3" class="tn b" font-size="9.2" textLength="17.5" lengthAdjust="spacingAndGlyphs">3×14</text>
<text x="856.8" y="405.3" class="tn b" font-size="9.2" textLength="3.2" lengthAdjust="spacingAndGlyphs">1</text>
<text x="870" y="405.3" class="tn b" font-size="9.2" textLength="6.7" lengthAdjust="spacingAndGlyphs">T8</text>
<text x="699.7" y="417.3" class="tn b" font-size="9.2" textLength="7" lengthAdjust="spacingAndGlyphs">16</text>
<text x="714.2" y="417.3" class="tn b" font-size="9.2" textLength="39.8" lengthAdjust="spacingAndGlyphs">GB/T99.2-1988</text>
<text x="782" y="417" class="tc b" font-size="8.4" textLength="17.5" lengthAdjust="spacingAndGlyphs">圆柱销</text>
<text x="800.5" y="417.3" class="tn b" font-size="9.2" textLength="17.5" lengthAdjust="spacingAndGlyphs">3×30</text>
<text x="856.8" y="417.3" class="tn b" font-size="9.2" textLength="3.2" lengthAdjust="spacingAndGlyphs">2</text>
<text x="870" y="417.3" class="tn b" font-size="9.2" textLength="6.7" lengthAdjust="spacingAndGlyphs">T8</text>
<text x="699.7" y="429.3" class="tn b" font-size="9.2" textLength="7" lengthAdjust="spacingAndGlyphs">15</text>
<text x="714.2" y="429.3" class="tn b" font-size="9.2" textLength="39.8" lengthAdjust="spacingAndGlyphs">GB/T70.1-2000</text>
<text x="782" y="429" class="tc b" font-size="8.4" textLength="45.5" lengthAdjust="spacingAndGlyphs">内六角圆柱头螺钉</text>
<text x="831.5" y="429.3" class="tn b" font-size="9.2" textLength="15.5" lengthAdjust="spacingAndGlyphs">M6X20</text>
<text x="856.8" y="429.3" class="tn b" font-size="9.2" textLength="3.2" lengthAdjust="spacingAndGlyphs">2</text>
<text x="870" y="429.3" class="tn b" font-size="9.2" textLength="6.7" lengthAdjust="spacingAndGlyphs">45</text>
<text x="699.7" y="440.3" class="tn b" font-size="9.2" textLength="7" lengthAdjust="spacingAndGlyphs">14</text>
<text x="714.2" y="440.3" class="tn b" font-size="9.2" textLength="39.8" lengthAdjust="spacingAndGlyphs">GB/T70.1-2000</text>
<text x="782" y="440" class="tc b" font-size="8.4" textLength="45.5" lengthAdjust="spacingAndGlyphs">内六角圆柱头螺钉</text>
<text x="831.5" y="440.3" class="tn b" font-size="9.2" textLength="15.5" lengthAdjust="spacingAndGlyphs">M6X12</text>
<text x="856.8" y="440.3" class="tn b" font-size="9.2" textLength="3.2" lengthAdjust="spacingAndGlyphs">2</text>
<text x="870" y="440.3" class="tn b" font-size="9.2" textLength="6.7" lengthAdjust="spacingAndGlyphs">45</text>
<text x="699.7" y="452.3" class="tn b" font-size="9.2" textLength="7" lengthAdjust="spacingAndGlyphs">13</text>
<text x="714.2" y="452.3" class="tn b" font-size="9.2" textLength="39.8" lengthAdjust="spacingAndGlyphs">GB/T99.2-1988</text>
<text x="782" y="452" class="tc b" font-size="8.4" textLength="17.5" lengthAdjust="spacingAndGlyphs">圆柱销</text>
<text x="800.5" y="452.3" class="tn b" font-size="9.2" textLength="17.5" lengthAdjust="spacingAndGlyphs">3×30</text>
<text x="856.8" y="452.3" class="tn b" font-size="9.2" textLength="3.2" lengthAdjust="spacingAndGlyphs">2</text>
<text x="870" y="452.3" class="tn b" font-size="9.2" textLength="6.7" lengthAdjust="spacingAndGlyphs">T8</text>
<text x="699.7" y="464.3" class="tn b" font-size="9.2" textLength="7" lengthAdjust="spacingAndGlyphs">12</text>
<text x="782" y="464" class="tc b" font-size="8.4" textLength="12" lengthAdjust="spacingAndGlyphs">底座</text>
<text x="856.8" y="464.3" class="tn b" font-size="9.2" textLength="3.2" lengthAdjust="spacingAndGlyphs">1</text>
<text x="870" y="464.3" class="tn b" font-size="9.2" textLength="6.7" lengthAdjust="spacingAndGlyphs">45</text>
<text x="699.7" y="476.3" class="tn b" font-size="9.2" textLength="7" lengthAdjust="spacingAndGlyphs">11</text>
<text x="714.2" y="476.3" class="tn b" font-size="9.2" textLength="39.8" lengthAdjust="spacingAndGlyphs">GB/T5783-2000</text>
<text x="782" y="476" class="tc b" font-size="8.4" textLength="49.5" lengthAdjust="spacingAndGlyphs">六角头螺栓-全螺纹</text>
<text x="835" y="476.3" class="tn b" font-size="9.2" textLength="12.5" lengthAdjust="spacingAndGlyphs">M3X8</text>
<text x="856.8" y="476.3" class="tn b" font-size="9.2" textLength="3.2" lengthAdjust="spacingAndGlyphs">2</text>
<text x="870" y="476.3" class="tn b" font-size="9.2" textLength="6.7" lengthAdjust="spacingAndGlyphs">45</text>
<text x="699.7" y="488.3" class="tn b" font-size="9.2" textLength="7" lengthAdjust="spacingAndGlyphs">10</text>
<text x="782" y="488" class="tc b" font-size="8.4" textLength="18" lengthAdjust="spacingAndGlyphs">定位块</text>
<text x="856.8" y="488.3" class="tn b" font-size="9.2" textLength="3.2" lengthAdjust="spacingAndGlyphs">1</text>
<text x="870" y="488.3" class="tn b" font-size="9.2" textLength="6.7" lengthAdjust="spacingAndGlyphs">45</text>
<text x="699.7" y="500.3" class="tn b" font-size="9.2" textLength="3.6" lengthAdjust="spacingAndGlyphs">9</text>
<text x="714.2" y="500.3" class="tn b" font-size="9.2" textLength="45.8" lengthAdjust="spacingAndGlyphs">JB/T8008.5-1999</text>
<text x="782" y="500" class="tc b" font-size="8.4" textLength="32" lengthAdjust="spacingAndGlyphs">A型快换垫圈</text>
<text x="818" y="500.3" class="tn b" font-size="9.2" textLength="15" lengthAdjust="spacingAndGlyphs">A8X25</text>
<text x="856.8" y="500.3" class="tn b" font-size="9.2" textLength="3.2" lengthAdjust="spacingAndGlyphs">1</text>
<text x="870" y="500.3" class="tn b" font-size="9.2" textLength="6.7" lengthAdjust="spacingAndGlyphs">45</text>
<text x="699.7" y="512.3" class="tn b" font-size="9.2" textLength="3.6" lengthAdjust="spacingAndGlyphs">8</text>
<text x="714.2" y="512.3" class="tn b" font-size="9.2" textLength="39.8" lengthAdjust="spacingAndGlyphs">GB/T70.1-2000</text>
<text x="782" y="512" class="tc b" font-size="8.4" textLength="45.5" lengthAdjust="spacingAndGlyphs">内六角圆柱头螺钉</text>
<text x="831.5" y="512.3" class="tn b" font-size="9.2" textLength="15.5" lengthAdjust="spacingAndGlyphs">M6X10</text>
<text x="856.8" y="512.3" class="tn b" font-size="9.2" textLength="3.2" lengthAdjust="spacingAndGlyphs">1</text>
<text x="870" y="512.3" class="tn b" font-size="9.2" textLength="6.7" lengthAdjust="spacingAndGlyphs">45</text>
<text x="699.7" y="524.3" class="tn b" font-size="9.2" textLength="3.6" lengthAdjust="spacingAndGlyphs">7</text>
<text x="782" y="524" class="tc b" font-size="8.4" textLength="11.5" lengthAdjust="spacingAndGlyphs">心轴</text>
<text x="856.8" y="524.3" class="tn b" font-size="9.2" textLength="3.2" lengthAdjust="spacingAndGlyphs">1</text>
<text x="870" y="524.3" class="tn b" font-size="9.2" textLength="6.7" lengthAdjust="spacingAndGlyphs">45</text>
<text x="699.7" y="536.3" class="tn b" font-size="9.2" textLength="3.6" lengthAdjust="spacingAndGlyphs">6</text>
<text x="782" y="536" class="tc b" font-size="8.4" textLength="29.5" lengthAdjust="spacingAndGlyphs">对刀块底座</text>
<text x="856.8" y="536.3" class="tn b" font-size="9.2" textLength="3.2" lengthAdjust="spacingAndGlyphs">1</text>
<text x="870" y="536.3" class="tn b" font-size="9.2" textLength="6.7" lengthAdjust="spacingAndGlyphs">45</text>
<text x="699.7" y="548.3" class="tn b" font-size="9.2" textLength="3.6" lengthAdjust="spacingAndGlyphs">5</text>
<text x="714.2" y="548.3" class="tn b" font-size="9.2" textLength="27.3" lengthAdjust="spacingAndGlyphs">GB95-2002</text>
<text x="782" y="548" class="tc b" font-size="8.4" textLength="30.5" lengthAdjust="spacingAndGlyphs">平垫圈-C级</text>
<text x="815" y="548.3" class="tn b" font-size="9.2" textLength="3" lengthAdjust="spacingAndGlyphs">8</text>
<text x="856.8" y="548.3" class="tn b" font-size="9.2" textLength="3.2" lengthAdjust="spacingAndGlyphs">1</text>
<text x="870" y="548.3" class="tn b" font-size="9.2" textLength="6.7" lengthAdjust="spacingAndGlyphs">45</text>
<text x="699.7" y="559.3" class="tn b" font-size="9.2" textLength="3.6" lengthAdjust="spacingAndGlyphs">4</text>
<text x="714.2" y="559.3" class="tn b" font-size="9.2" textLength="33.8" lengthAdjust="spacingAndGlyphs">GB/T41-2000</text>
<text x="782" y="559" class="tc b" font-size="8.4" textLength="36" lengthAdjust="spacingAndGlyphs">六角螺母-C级</text>
<text x="821" y="559.3" class="tn b" font-size="9.2" textLength="6" lengthAdjust="spacingAndGlyphs">M8</text>
<text x="856.8" y="559.3" class="tn b" font-size="9.2" textLength="3.2" lengthAdjust="spacingAndGlyphs">3</text>
<text x="870" y="559.3" class="tn b" font-size="9.2" textLength="6.7" lengthAdjust="spacingAndGlyphs">45</text>
<text x="699.7" y="571.3" class="tn b" font-size="9.2" textLength="3.6" lengthAdjust="spacingAndGlyphs">3</text>
<text x="782" y="571" class="tc b" font-size="8.4" textLength="18" lengthAdjust="spacingAndGlyphs">夹具体</text>
<text x="856.8" y="571.3" class="tn b" font-size="9.2" textLength="3.2" lengthAdjust="spacingAndGlyphs">1</text>
<text x="870" y="571.3" class="tn b" font-size="9.2" textLength="15.8" lengthAdjust="spacingAndGlyphs">HT200</text>
<text x="699.7" y="583.3" class="tn b" font-size="9.2" textLength="3.6" lengthAdjust="spacingAndGlyphs">2</text>
<text x="714.2" y="583.3" class="tn b" font-size="9.2" textLength="39.8" lengthAdjust="spacingAndGlyphs">GB/T70.1-2000</text>
<text x="782" y="583" class="tc b" font-size="8.4" textLength="45.5" lengthAdjust="spacingAndGlyphs">内六角圆柱头螺钉</text>
<text x="831.5" y="583.3" class="tn b" font-size="9.2" textLength="15.5" lengthAdjust="spacingAndGlyphs">M6X10</text>
<text x="856.8" y="583.3" class="tn b" font-size="9.2" textLength="3.2" lengthAdjust="spacingAndGlyphs">2</text>
<text x="870" y="583.3" class="tn b" font-size="9.2" textLength="6.7" lengthAdjust="spacingAndGlyphs">45</text>
<text x="699.7" y="595.3" class="tn b" font-size="9.2" textLength="3.6" lengthAdjust="spacingAndGlyphs">1</text>
<text x="714.2" y="595.3" class="tn b" font-size="9.2" textLength="39.8" lengthAdjust="spacingAndGlyphs">JB/T8046-1999</text>
<text x="782" y="595" class="tc b" font-size="8.4" textLength="27" lengthAdjust="spacingAndGlyphs">圆键定位销</text>
<text x="812.5" y="595.3" class="tn b" font-size="9.2" textLength="14.5" lengthAdjust="spacingAndGlyphs">B14h6</text>
<text x="856.8" y="595.3" class="tn b" font-size="9.2" textLength="3.2" lengthAdjust="spacingAndGlyphs">2</text>
<text x="870" y="595.3" class="tn b" font-size="9.2" textLength="6.7" lengthAdjust="spacingAndGlyphs">45</text>
<text x="699.2" y="615.5" class="tc b bb" font-size="13" textLength="11.1" lengthAdjust="spacingAndGlyphs">序号</text>
<text x="737.5" y="615.5" class="tc b bb" font-size="13" textLength="16.7" lengthAdjust="spacingAndGlyphs">代号</text>
<text x="808.7" y="615.5" class="tc b bb" font-size="13" textLength="16.6" lengthAdjust="spacingAndGlyphs">名称</text>
<text x="855.5" y="615.5" class="tc b bb" font-size="13" textLength="11" lengthAdjust="spacingAndGlyphs">数量</text>
<text x="891.7" y="615.5" class="tc b bb" font-size="13" textLength="16.3" lengthAdjust="spacingAndGlyphs">材料</text>
<text x="978.3" y="615.5" class="tc b bb" font-size="13" textLength="16.7" lengthAdjust="spacingAndGlyphs">备注</text>
<line x1="932.5" y1="609.5" x2="969.5" y2="609.5"/>
<text x="935.3" y="607.2" class="tc b" font-size="8.4" textLength="11.7" lengthAdjust="spacingAndGlyphs">单件</text>
<text x="954.2" y="607.2" class="tc b" font-size="8.4" textLength="11.6" lengthAdjust="spacingAndGlyphs">总计</text>
<text x="945" y="619" class="tc b" font-size="8.2" textLength="11.7" lengthAdjust="spacingAndGlyphs">重量</text>
<!-- title block -->
<line x1="697.5" y1="633.5" x2="833.5" y2="633.5"/>
<line x1="697.5" y1="645.5" x2="833.5" y2="645.5"/>
<line x1="697.5" y1="657.5" x2="833.5" y2="657.5"/>
<line x1="714.5" y1="621.5" x2="714.5" y2="668.5"/>
<line x1="731.5" y1="621.5" x2="731.5" y2="668.5"/>
<line x1="759.5" y1="621.5" x2="759.5" y2="668.5"/>
<line x1="786.5" y1="621.5" x2="786.5" y2="716.5"/>
<line x1="806.5" y1="621.5" x2="806.5" y2="716.5"/>
<line x1="697.5" y1="621.5" x2="697.5" y2="716.5"/>
<line x1="833.5" y1="621.5" x2="833.5" y2="716.5"/>
<line x1="697.5" y1="668.5" x2="918.5" y2="668.5"/>
<line x1="697.5" y1="680.5" x2="833.5" y2="680.5"/>
<line x1="697.5" y1="692.5" x2="833.5" y2="692.5"/>
<line x1="697.5" y1="704.5" x2="833.5" y2="704.5"/>
<line x1="718.5" y1="668.5" x2="718.5" y2="716.5"/>
<line x1="738.5" y1="668.5" x2="738.5" y2="716.5"/>
<line x1="765.5" y1="668.5" x2="765.5" y2="716.5"/>
<text x="700" y="666.6" class="tc b" font-size="8.2" textLength="11.7" lengthAdjust="spacingAndGlyphs">标记</text>
<text x="717" y="666.6" class="tc b" font-size="8.2" textLength="12.2" lengthAdjust="spacingAndGlyphs">处数</text>
<text x="738.3" y="666.6" class="tc b" font-size="8.2" textLength="14.7" lengthAdjust="spacingAndGlyphs">分 区</text>
<text x="760" y="666.6" class="tc b" font-size="8.2" textLength="26.3" lengthAdjust="spacingAndGlyphs">更改文件号</text>
<text x="789.2" y="666.6" class="tc b" font-size="8.2" textLength="15" lengthAdjust="spacingAndGlyphs">签 名</text>
<text x="806.7" y="666.6" class="tc b" font-size="8.2" textLength="26.3" lengthAdjust="spacingAndGlyphs">年、月、日</text>
<text x="700.8" y="679" class="tc b" font-size="8.2" textLength="14.2" lengthAdjust="spacingAndGlyphs">设 计</text>
<text x="767" y="679" class="tc b" font-size="8.2" textLength="18" lengthAdjust="spacingAndGlyphs">标准化</text>
<text x="700.8" y="702.6" class="tc b" font-size="8.2" textLength="14.2" lengthAdjust="spacingAndGlyphs">审 核</text>
<text x="700.8" y="714.5" class="tc b" font-size="8.2" textLength="14.2" lengthAdjust="spacingAndGlyphs">工 艺</text>
<text x="769.2" y="714.5" class="tc b" font-size="8.2" textLength="14.1" lengthAdjust="spacingAndGlyphs">批 准</text>
<line x1="918.5" y1="621.5" x2="918.5" y2="716.5"/>
<line x1="833.5" y1="685.5" x2="1003.5" y2="685.5"/>
<line x1="833.5" y1="701.5" x2="918.5" y2="701.5"/>
<line x1="878.5" y1="668.5" x2="878.5" y2="701.5"/>
<line x1="898.5" y1="668.5" x2="898.5" y2="701.5"/>
<line x1="845" y1="685.5" x2="845" y2="701.5"/>
<line x1="856.5" y1="685.5" x2="856.5" y2="701.5"/>
<line x1="867.5" y1="685.5" x2="867.5" y2="701.5"/>
<text x="840" y="682" class="tc b" font-size="8.2" textLength="31.7" lengthAdjust="spacingAndGlyphs">阶 段 标 记</text>
<text x="880.8" y="682" class="tc b" font-size="8.2" textLength="14.5" lengthAdjust="spacingAndGlyphs">重 量</text>
<text x="901.7" y="682" class="tc b" font-size="8.2" textLength="13.6" lengthAdjust="spacingAndGlyphs">比 例</text>
<text x="905" y="698" class="tn b" font-size="9" textLength="8.3" lengthAdjust="spacingAndGlyphs">1:1</text>
<text x="845" y="713.8" class="tc b" font-size="8.2" textLength="6.3" lengthAdjust="spacingAndGlyphs">共</text>
<text x="865.8" y="713.8" class="tc b" font-size="8.2" textLength="6.2" lengthAdjust="spacingAndGlyphs">张</text>
<text x="880.8" y="713.8" class="tc b" font-size="8.2" textLength="5" lengthAdjust="spacingAndGlyphs">第</text>
<text x="900.8" y="713.8" class="tc b" font-size="8.2" textLength="6.2" lengthAdjust="spacingAndGlyphs">张</text>
<line x1="918.5" y1="651.5" x2="1003.5" y2="651.5"/>
</g>
<!-- AutoCAD properties toolbar (bottom edge only is visible) -->
<g id="tb" shape-rendering="auto" stroke="none">
<defs><clipPath id="tclip"><rect x="0" y="0" width="1032" height="11"/></clipPath></defs>
<rect x="0" y="0" width="1032" height="12" fill="#f0f0f0"/>
<rect x="0" y="12" width="1032" height="1" fill="#a0a0a0"/>
<rect x="0" y="13" width="1032" height="1" fill="#f0f0f0"/>
<rect x="0" y="14" width="1032" height="1" fill="#a0a0a0"/>
<rect x="0" y="15" width="1032" height="1" fill="#696969"/>
<rect x="0" y="738" width="1032" height="3" fill="#f0f0f0"/>
<g clip-path="url(#tclip)">
<rect x="72" y="-2" width="298" height="12.5" fill="#fff"/>
<rect x="435" y="-2" width="148" height="12.5" fill="#fff"/>
<rect x="592" y="-2" width="158" height="12.5" fill="#fff"/>
<rect x="758" y="-2" width="123" height="12.5" fill="#fff"/>
<rect x="889.5" y="-2" width="117" height="12.5" fill="#f0f0f0" stroke="#b4b4b4" stroke-width="1"/>
<rect x="985" y="-2" width="21" height="11.5" fill="#fff"/>
<rect x="40" y="0" width="1" height="11" fill="#8c8c8c"/>
<rect x="41" y="0" width="1" height="11" fill="#fff"/>
<rect x="44" y="0" width="1" height="11" fill="#8c8c8c"/>
<rect x="45" y="0" width="1" height="11" fill="#fff"/>
<rect x="424" y="0" width="1" height="11" fill="#8c8c8c"/>
<rect x="425" y="0" width="1" height="11" fill="#fff"/>
<rect x="428" y="0" width="1" height="11" fill="#8c8c8c"/>
<rect x="429" y="0" width="1" height="11" fill="#fff"/>
<rect x="587" y="0" width="7" height="11" fill="#e4e6ee" transform="translate(-3.5 0)"/>
<rect x="587" y="0" width="1" height="10" fill="#333"/>
<rect x="753.5" y="0" width="7" height="11" fill="#e4e6ee" transform="translate(-3.5 0)"/>
<rect x="753.5" y="0" width="1" height="10" fill="#333"/>
<rect x="884" y="0" width="7" height="11" fill="#e4e6ee" transform="translate(-3.5 0)"/>
<rect x="884" y="0" width="1" height="10" fill="#333"/>
<rect x="33" y="0" width="1" height="12" fill="#a0a0a0"/>
<rect x="0" y="0" width="3" height="8.7" fill="#2f6fb8"/>
<rect x="0" y="2" width="2" height="2" fill="#1b2a44"/>
<rect x="10.5" y="0" width="15.5" height="8.7" rx="1" fill="#b4c4d6"/>
<rect x="12" y="0" width="13" height="7" fill="#26282c"/>
<path d="M51 2L59 -1L67 2L59 5.5Z" fill="#a9c0e0" stroke="#5f7fae" stroke-width="0.8"/>
<path d="M51 4.5L59 7.8L67 4.5" fill="none" stroke="#4f73a8" stroke-width="1.4"/>
<path d="M79.5 -2h6.500v3.500l-1.500 1.500h-3.500l-1.500 -1.500Z" fill="#fff3a8" stroke="#c9b458" stroke-width="0.8"/>
<rect x="80.500" y="3" width="4.500" height="3.500" rx="1" fill="#6f7fc4" stroke="#3f4f94" stroke-width="0.6"/>
<rect x="92" y="3" width="13" height="4" fill="#ffe23a"/>
<circle cx="98.500" cy="0" r="6.500" fill="#ffe23a" stroke="#2a7ad8" stroke-width="1"/>
<circle cx="113" cy="-0.500" r="5.500" fill="#8db0dc" stroke="#5a82b8" stroke-width="0.8"/>
<rect x="114" y="0" width="8" height="6.300" fill="#fff" stroke="#6f8fc0" stroke-width="1"/>
<rect x="131.500" y="-2" width="8" height="8.500" rx="2" fill="#cfc83a" stroke="#7a7a10" stroke-width="1"/>
<rect x="126" y="0" width="2" height="1.200" fill="#554"/>
<rect x="142.500" y="-4" width="9" height="9" fill="#fff" stroke="#000" stroke-width="1"/>
<text x="157.400" y="4.700" font-size="13" class="k" textLength="16.600" lengthAdjust="spacingAndGlyphs">EbU</text>
<path d="M362.5 0h9l-4.500 4.500Z" fill="#000" transform="translate(-4.500 0)"/>
<path d="M576.5 0h9l-4.500 4.500Z" fill="#000" transform="translate(-4.500 0)"/>
<path d="M742.5 0h9l-4.500 4.500Z" fill="#000" transform="translate(-4.500 0)"/>
<path d="M873.5 0h9l-4.500 4.500Z" fill="#000" transform="translate(-4.500 0)"/>
<path d="M999.500 0h8l-4 4Z" fill="#a0a0a0" transform="translate(-4 0)"/>
<rect x="370" y="0" width="51" height="11" fill="#ececec"/>
<path d="M375 2L382 -1L390 2L382 5.500Z" fill="#b8cbe6" stroke="#6f88ad" stroke-width="0.8"/><path d="M375 3.500L382 6.500L390 3.500L382 1Z" fill="#f3d23a" stroke="#b89a10" stroke-width="0.8"/>
<path d="M373.500 8L376.500 5M376.500 5h-2.500M376.500 5v2.500" stroke="#1a3a8a" stroke-width="1.200" fill="none"/>
<path d="M397 2L404.500 -1L412.500 2L404.500 5.500Z" fill="#a9c0e0" stroke="#5f7fae" stroke-width="0.8"/>
<path d="M397 4.500L404.500 7.600L412.500 4.500" fill="none" stroke="#4f73a8" stroke-width="1.400"/>
<rect x="441.500" y="-4" width="9" height="9.500" fill="#fff" stroke="#000" stroke-width="1"/>
<text x="455" y="4.500" font-size="13" class="k" textLength="41" lengthAdjust="spacingAndGlyphs">ByLayer</text>
<rect x="596" y="1" width="60" height="1" fill="#000"/>
<text x="661" y="4.500" font-size="13" class="k" textLength="41" lengthAdjust="spacingAndGlyphs">ByLayer</text>
<rect x="761.500" y="-1" width="36" height="3.700" fill="#000"/>
<text x="802" y="4.500" font-size="13" class="k" textLength="41" lengthAdjust="spacingAndGlyphs">ByLayer</text>
<text x="897" y="5.500" font-size="12" class="g" textLength="36" lengthAdjust="spacingAndGlyphs">随颜色</text>
</g></g></svg>
</body></html>
